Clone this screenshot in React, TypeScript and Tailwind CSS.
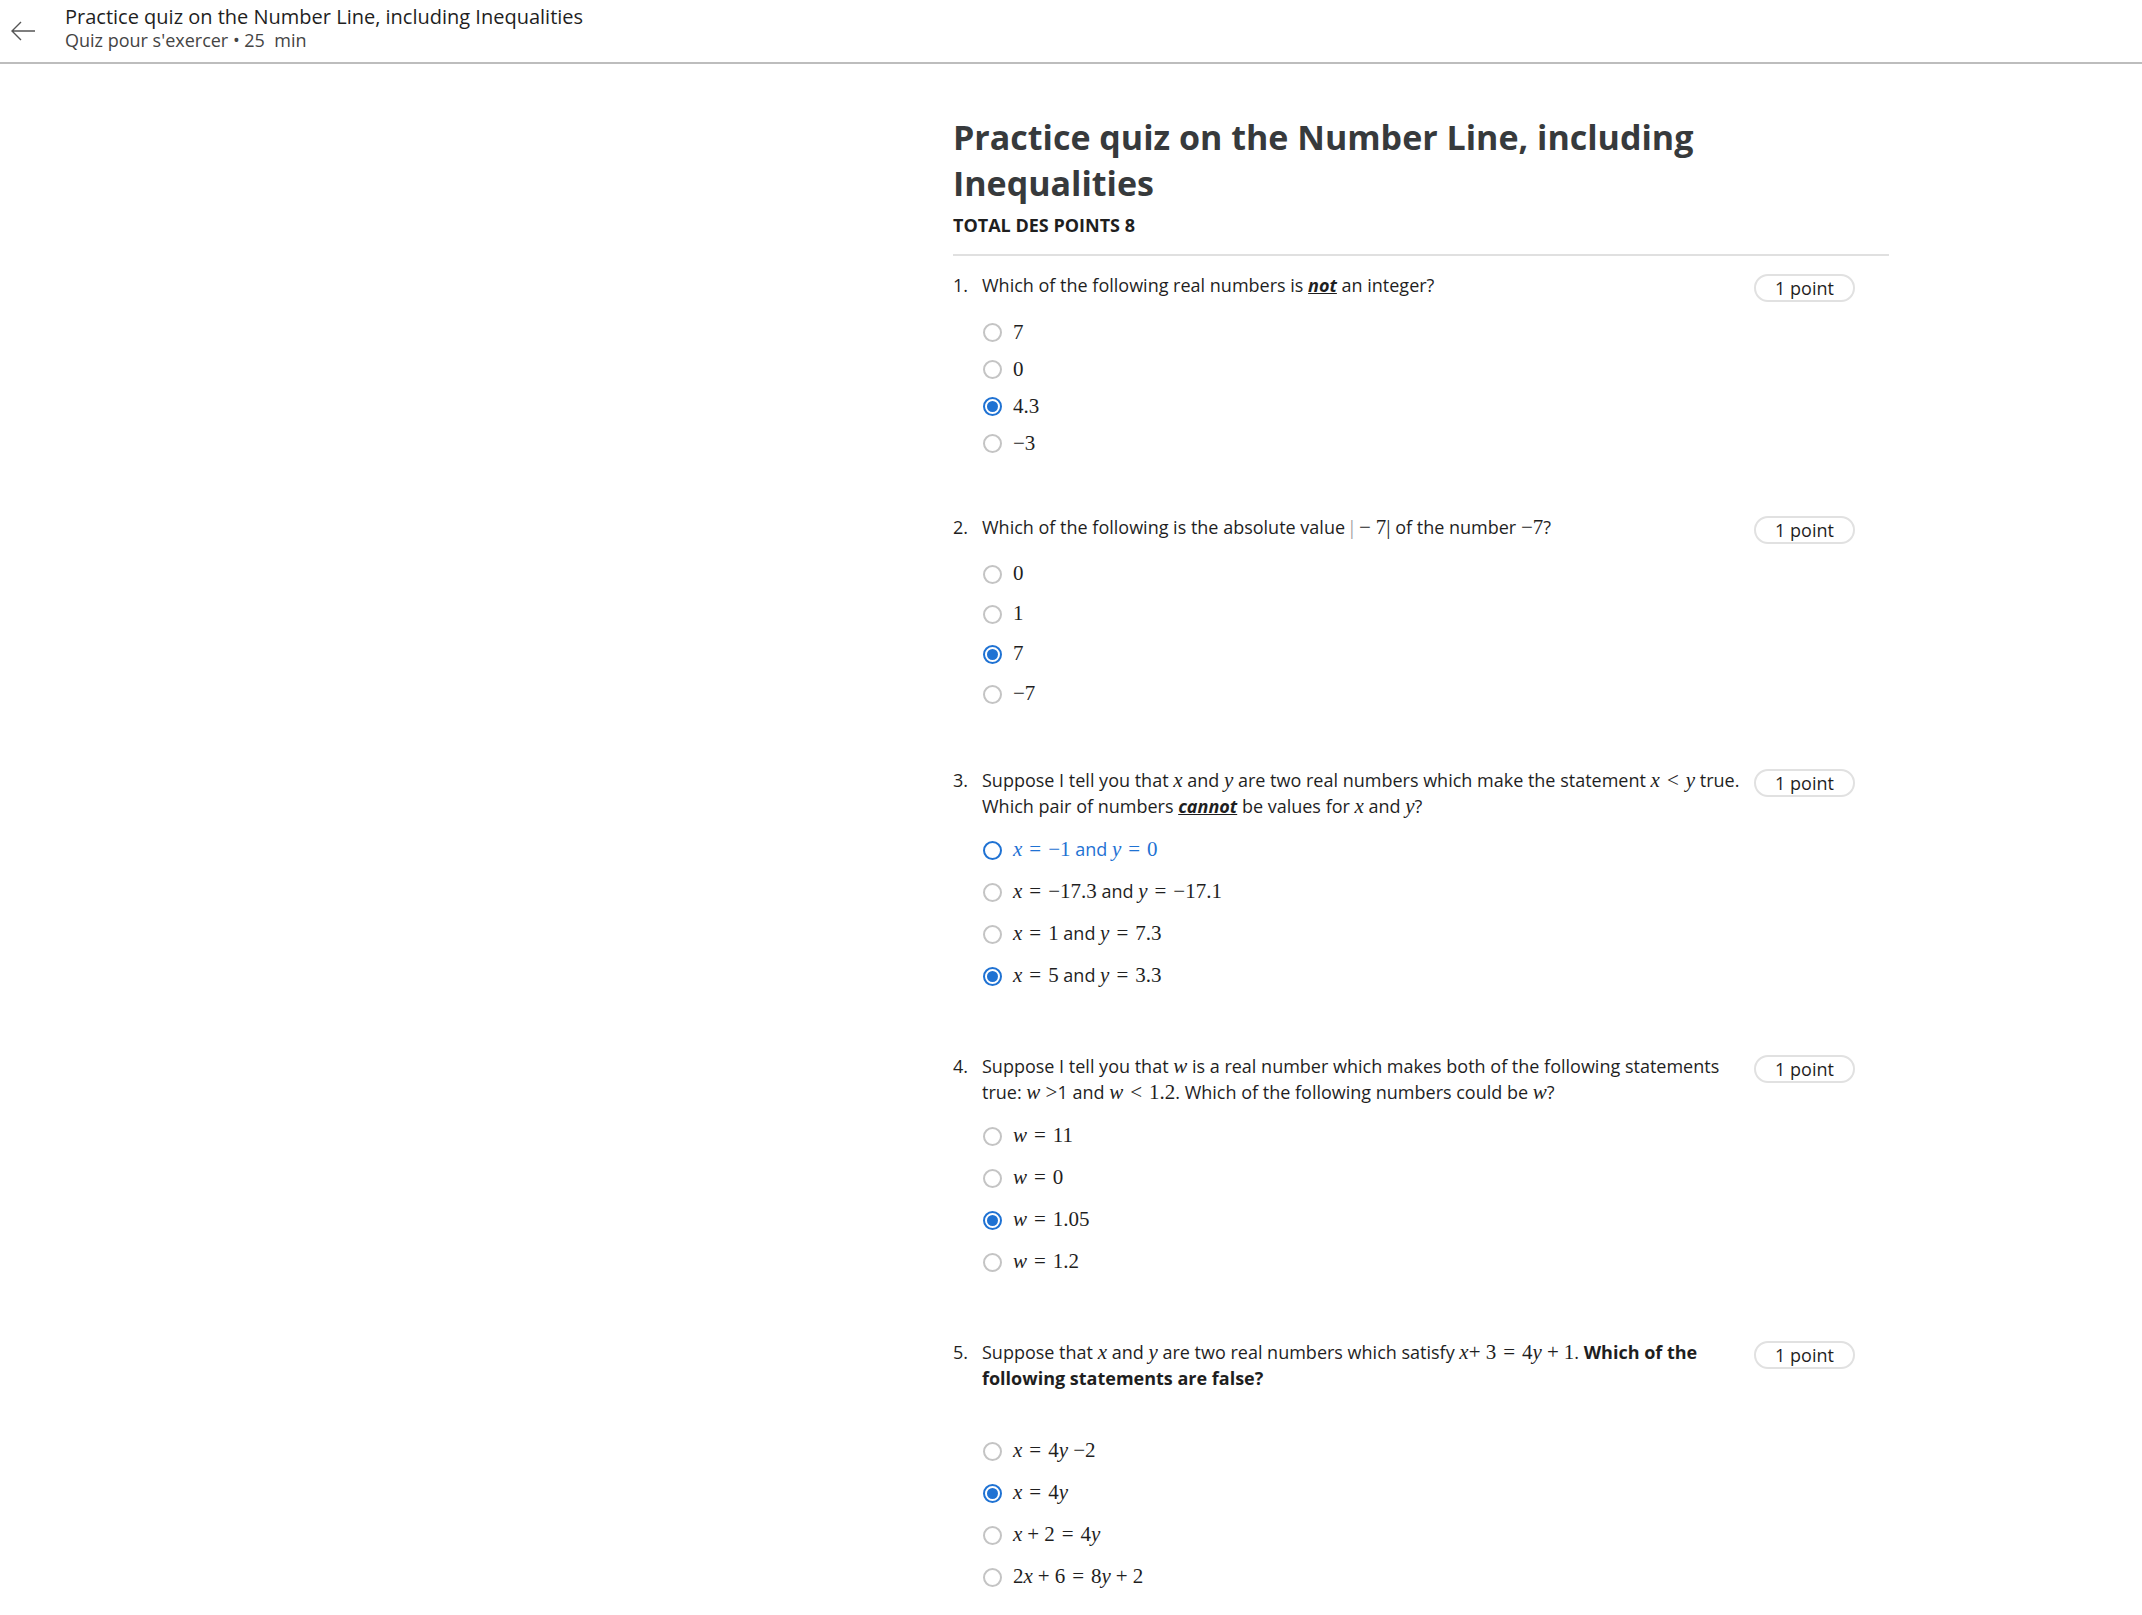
import type { ReactNode } from "react";

const sans = { fontFamily: '"Open Sans", "Noto Sans", sans-serif' };

// small helpers for the math bits (KaTeX-ish look)
const M = ({ children }: { children: ReactNode }) => (
    <span className="font-['Liberation_Serif',serif] text-[21px] whitespace-nowrap">{children}</span>
);
const V = ({ children }: { children: ReactNode }) => <i>{children}</i>;
// relation / binary operator with KaTeX-like spacing
const R = ({ children }: { children: ReactNode }) => <span className="mx-[7px]">{children}</span>;
const B = ({ children }: { children: ReactNode }) => <span className="mx-[5px]">{children}</span>;

interface OptionProps {
    label: ReactNode;
    checked?: boolean;
    hover?: boolean;
}

interface QuestionProps {
    num: number;
    text: ReactNode;
    options: OptionProps[];
    rowH: string;
    top: string;
    extraGap?: boolean;
}

const Radio = ({ checked, hover }: { checked?: boolean; hover?: boolean }) => {
    if (checked) {
        return (
            <span className="flex h-[19px] w-[19px] shrink-0 items-center justify-center rounded-full border-2 border-[#1f72d3]">
                <span className="h-[11px] w-[11px] rounded-full bg-[#1f72d3]" />
            </span>
        );
    }
    return (
        <span
            className={
                hover
                    ? "h-[19px] w-[19px] shrink-0 rounded-full border-2 border-[#1f72d3]"
                    : "h-[19px] w-[19px] shrink-0 rounded-full border-2 border-[#c4c4c4]"
            }
        />
    );
};

const Question = ({ num, text, options, rowH, top, extraGap }: QuestionProps) => (
    <div className={top}>
        <div className="flex items-start">
            <div className="w-[29px] shrink-0 text-[18px] leading-[26px] text-[#1f1f1f]">{num}.</div>
            <div className="flex-1 text-[18px] leading-[26px] text-[#1f1f1f]">{text}</div>
            <div className="ml-[6px] mr-[34px] mt-[2px] flex h-[28px] w-[101px] shrink-0 items-center justify-center rounded-full border-2 border-[#e1e1e1] text-[18px] text-[#1f1f1f]">
                1 point
            </div>
        </div>
        <div className={extraGap ? "mt-[39px] pl-[30px]" : num === 1 ? "mt-[12px] pl-[30px]" : "mt-[10px] pl-[30px]"}>
            {options.map((o, i) => (
                <div key={i} className={`flex items-center ${rowH}`}>
                    <Radio checked={o.checked} hover={o.hover} />
                    <div className={o.hover ? "ml-[11px] text-[18px] text-[#1f72d3]" : "ml-[11px] text-[18px] text-[#1f1f1f]"}>
                        {o.label}
                    </div>
                </div>
            ))}
        </div>
    </div>
);

const App = () => {
    const questions: QuestionProps[] = [
        {
            num: 1,
            rowH: "h-[37px]",
            top: "mt-[16px]",
            text: (
                <>
                    Which of the following real numbers is <b className="italic underline">not</b> an integer?
                </>
            ),
            options: [
                { label: <M>7</M> },
                { label: <M>0</M> },
                { label: <M>4.3</M>, checked: true },
                { label: <M>−3</M> },
            ],
        },
        {
            num: 2,
            rowH: "h-[40px]",
            top: "mt-[52px]",
            text: (
                <>
                    Which of the following is the absolute value <M><span className="text-[#9a9a9a]">|</span><B>−</B>7|</M> of the number <M>−7</M>?
                </>
            ),
            options: [
                { label: <M>0</M> },
                { label: <M>1</M> },
                { label: <M>7</M>, checked: true },
                { label: <M>−7</M> },
            ],
        },
        {
            num: 3,
            rowH: "h-[42px]",
            top: "mt-[53px]",
            text: (
                <>
                    Suppose I tell you that <M><V>x</V></M> and <M><V>y</V></M> are two real numbers which make the statement <M><V>x</V><R>&lt;</R><V>y</V></M> true. Which pair of numbers <b className="italic underline">cannot</b> be values for <M><V>x</V></M> and <M><V>y</V></M>?
                </>
            ),
            options: [
                { label: <><M><V>x</V><R>=</R>−1</M> and <M><V>y</V><R>=</R>0</M></>, hover: true },
                { label: <><M><V>x</V><R>=</R>−17.3</M> and <M><V>y</V><R>=</R>−17.1</M></> },
                { label: <><M><V>x</V><R>=</R>1</M> and <M><V>y</V><R>=</R>7.3</M></> },
                { label: <><M><V>x</V><R>=</R>5</M> and <M><V>y</V><R>=</R>3.3</M></>, checked: true },
            ],
        },
        {
            num: 4,
            rowH: "h-[42px]",
            top: "mt-[56px]",
            text: (
                <>
                    Suppose I tell you that <M><V>w</V></M> is a real number which makes both of the following statements true: <M><V>w</V> &gt;</M>1 and <M><V>w</V><R>&lt;</R>1.2</M>. Which of the following numbers could be <M><V>w</V></M>?
                </>
            ),
            options: [
                { label: <M><V>w</V><R>=</R>11</M> },
                { label: <M><V>w</V><R>=</R>0</M> },
                { label: <M><V>w</V><R>=</R>1.05</M>, checked: true },
                { label: <M><V>w</V><R>=</R>1.2</M> },
            ],
        },
        {
            num: 5,
            rowH: "h-[42px]",
            top: "mt-[56px]",
            extraGap: true,
            text: (
                <>
                    Suppose that <M><V>x</V></M> and <M><V>y</V></M> are two real numbers which satisfy <M><V>x</V>+ 3<R>=</R>4<V>y</V><B>+</B>1</M>. <b>Which of the following statements are false?</b>
                </>
            ),
            options: [
                { label: <M><V>x</V><R>=</R>4<V>y</V> −2</M> },
                { label: <M><V>x</V><R>=</R>4<V>y</V></M>, checked: true },
                { label: <M><V>x</V><B>+</B>2<R>=</R>4<V>y</V></M> },
                { label: <M>2<V>x</V><B>+</B>6<R>=</R>8<V>y</V><B>+</B>2</M> },
            ],
        },
    ];

    return (
        <div className="min-h-screen bg-white" style={sans}>
            <header className="flex h-[64px] items-center border-b-2 border-[#bdbdbd]">
                <button className="ml-[10px] flex h-[40px] w-[26px] items-center justify-center text-[#555]">
                    <svg width="26" height="22" viewBox="0 0 26 22" fill="none" stroke="currentColor" strokeWidth="1.4">
                        <path d="M25 11H2M11 2L2 11l9 9" />
                    </svg>
                </button>
                <div className="ml-[29px] mt-[-7px]">
                    <div className="text-[20px] leading-[26px] text-[#1f1f1f]">Practice quiz on the Number Line, including Inequalities</div>
                    <div className="text-[18px] leading-[21px] text-[#444]">Quiz pour s'exercer • 25&nbsp; min</div>
                </div>
            </header>

            <div className="flex">
                <aside className="w-[953px] shrink-0" />
                <main className="w-[936px] pb-[30px] pt-[50px]">
                    <h1 className="text-[34px] font-bold leading-[46px] text-[#373a3c]">
                        Practice quiz on the Number Line, including Inequalities
                    </h1>
                    <div className="mt-[7px] text-[18px] font-bold uppercase leading-[24px] text-[#1f1f1f]">Total des points 8</div>
                    <div className="mt-[17px] border-b-2 border-[#e0e0e0]" />
                    {questions.map((q) => (
                        <Question key={q.num} {...q} />
                    ))}
                </main>
            </div>
        </div>
    );
};

export default App;
